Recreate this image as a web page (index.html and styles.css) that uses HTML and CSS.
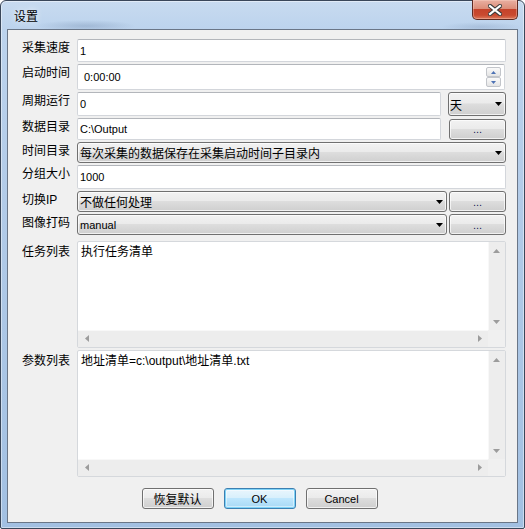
FILE: index.html
```html
<!DOCTYPE html>
<html lang="zh">
<head>
    <meta charset="UTF-8">
    <title>设置</title>
    <link rel="stylesheet" href="styles.css">
</head>
<body>
<div class="window">
    <div class="titlebar">
        <span class="title">设置</span>
        <div class="close-btn">
            <svg width="14" height="12" viewBox="0 0 14 12">
                <path d="M2 2l10 8M12 2L2 10" stroke="#3b3b3b" stroke-width="4.2" stroke-linecap="square"/>
                <path d="M2 2l10 8M12 2L2 10" stroke="#fff" stroke-width="2.2" stroke-linecap="square"/>
            </svg>
        </div>
    </div>

    <div class="client">
        <div class="form">
            <div class="row row-speed">
                <span class="label">采集速度</span>
                <div class="edit">1</div>
            </div>

            <div class="row row-start">
                <span class="label">启动时间</span>
                <div class="edit spin">
                    <span class="spin-text">0:00:00</span>
                    <div class="spin-buttons">
                        <span class="spin-btn"><svg width="5" height="3" viewBox="0 0 5 3"><path d="M2.5 0L5 3H0z"/></svg></span>
                        <span class="spin-btn"><svg width="5" height="3" viewBox="0 0 5 3"><path d="M0 0h5L2.5 3z"/></svg></span>
                    </div>
                </div>
            </div>

            <div class="row row-cycle">
                <span class="label">周期运行</span>
                <div class="edit">0</div>
                <div class="combo unit">
                    <span class="zh">天</span>
                    <svg class="arrow" width="7" height="4" viewBox="0 0 7 4"><path d="M0 0h7L3.5 4z"/></svg>
                </div>
            </div>

            <div class="row row-dir">
                <span class="label">数据目录</span>
                <div class="edit">C:\Output</div>
                <button class="btn browse">...</button>
            </div>

            <div class="row row-timedir">
                <span class="label">时间目录</span>
                <div class="combo">
                    <span class="zh">每次采集的数据保存在采集启动时间子目录内</span>
                    <svg class="arrow" width="7" height="4" viewBox="0 0 7 4"><path d="M0 0h7L3.5 4z"/></svg>
                </div>
            </div>

            <div class="row row-group">
                <span class="label">分组大小</span>
                <div class="edit">1000</div>
            </div>

            <div class="row row-ip">
                <span class="label">切换IP</span>
                <div class="combo">
                    <span class="zh">不做任何处理</span>
                    <svg class="arrow" width="7" height="4" viewBox="0 0 7 4"><path d="M0 0h7L3.5 4z"/></svg>
                </div>
                <button class="btn browse tight">...</button>
            </div>

            <div class="row row-code">
                <span class="label">图像打码</span>
                <div class="combo">
                    <span>manual</span>
                    <svg class="arrow" width="7" height="4" viewBox="0 0 7 4"><path d="M0 0h7L3.5 4z"/></svg>
                </div>
                <button class="btn browse tight">...</button>
            </div>

            <div class="row row-task">
                <span class="label memo-label">任务列表</span>
                <div class="memo">
                    <div class="memo-text">执行任务清单</div>
                    <div class="vscroll">
                        <span class="sb-btn"><svg width="7" height="4" viewBox="0 0 7 4"><path d="M3.5 0L7 4H0z"/></svg></span>
                        <span class="sb-btn"><svg width="7" height="4" viewBox="0 0 7 4"><path d="M0 0h7L3.5 4z"/></svg></span>
                    </div>
                    <div class="hscroll">
                        <span class="sb-btn"><svg width="4" height="7" viewBox="0 0 4 7"><path d="M0 3.5L4 0v7z"/></svg></span>
                        <span class="sb-btn"><svg width="4" height="7" viewBox="0 0 4 7"><path d="M0 0l4 3.5L0 7z"/></svg></span>
                    </div>
                    <div class="corner"></div>
                </div>
            </div>

            <div class="row row-param">
                <span class="label memo-label">参数列表</span>
                <div class="memo">
                    <div class="memo-text">地址清单=c:\output\地址清单.txt</div>
                    <div class="vscroll">
                        <span class="sb-btn"><svg width="7" height="4" viewBox="0 0 7 4"><path d="M3.5 0L7 4H0z"/></svg></span>
                        <span class="sb-btn"><svg width="7" height="4" viewBox="0 0 7 4"><path d="M0 0h7L3.5 4z"/></svg></span>
                    </div>
                    <div class="hscroll">
                        <span class="sb-btn"><svg width="4" height="7" viewBox="0 0 4 7"><path d="M0 3.5L4 0v7z"/></svg></span>
                        <span class="sb-btn"><svg width="4" height="7" viewBox="0 0 4 7"><path d="M0 0l4 3.5L0 7z"/></svg></span>
                    </div>
                    <div class="corner"></div>
                </div>
            </div>
        </div>

        <div class="actions">
            <button class="btn zh">恢复默认</button>
            <button class="btn btn-default">OK</button>
            <button class="btn">Cancel</button>
        </div>
    </div>
</div>
</body>
</html>
```

FILE: styles.css
```css
* {
    box-sizing: border-box;
}

body {
    margin: 0;
    background: #fff;
    font-family: "Liberation Sans", "Noto Sans CJK SC", sans-serif;
    font-size: 12px;
    color: #000;
}

.zh {
    font-size: 12px;
}

/* window frame */
.window {
    width: 525px;
    height: 529px;
    display: flex;
    flex-direction: column;
    padding: 0 6px 5px;
    border: 1px solid #3a475a;
    border-radius: 6px 6px 2px 2px;
    background:
        radial-gradient(ellipse 50px 6px at 85px 25px, rgba(110, 135, 170, 0.35), transparent),
        radial-gradient(ellipse 40px 5px at 480px 26px, rgba(110, 135, 170, 0.25), transparent),
        linear-gradient(180deg, #c8dbf0 0, #bcd3ed 28px, #b2cbe8 200px, #a2c0e2 100%);
    box-shadow: inset 0 0 0 1px rgba(255, 255, 255, 0.45);
}

.titlebar {
    height: 28px;
    display: flex;
    align-items: flex-start;
}

.title {
    margin: 8px 0 0 7px;
    line-height: 16px;
    text-shadow: 0 0 6px rgba(255, 255, 255, 0.9);
}

.close-btn {
    margin-left: auto;
    margin-top: -1px;
    width: 46px;
    height: 20px;
    display: flex;
    align-items: center;
    justify-content: center;
    border: 1px solid #5e2a22;
    border-top: none;
    border-radius: 0 0 5px 5px;
    background: linear-gradient(180deg, #e9b0a2 0, #dc8e7a 45%, #c5432b 50%, #c94a30 80%, #dd7a5c 100%);
    box-shadow: inset 0 0 0 1px rgba(255, 220, 210, 0.35);
}

.client {
    flex: 1;
    display: flex;
    flex-direction: column;
    border: 1px solid #6a7687;
    background: #f0f0f0;
}

/* form */
.form {
    display: flex;
    flex-direction: column;
    gap: 2px;
    padding: 9px 11px 0 14px;
}

.row {
    display: flex;
    align-items: flex-start;
}

.row-speed { height: 23px; }
.row-start { height: 26px; }
.row-cycle { height: 24px; }
.row-dir { height: 22px; }
.row-timedir { height: 21px; }
.row-group { height: 24px; }
.row-ip { height: 21px; }
.row-code { height: 21px; }
.row-task { height: 107px; margin-top: 4px; }
.row-param { height: 127px; }

.label {
    width: 55px;
    flex-shrink: 0;
    line-height: 16px;
    padding-top: 1px;
    white-space: nowrap;
}

.memo-label {
    padding-top: 3px;
}

.edit {
    flex: 1;
    height: 100%;
    display: flex;
    align-items: center;
    padding-left: 2px;
    font-size: 11px;
    background: #fff;
    border: 1px solid #d3d6db;
    border-top-color: #b3b6bb;
    border-radius: 2px;
}

.spin {
    justify-content: space-between;
    padding-left: 6px;
    margin-right: 1px;
}

.spin-buttons {
    display: flex;
    flex-direction: column;
    margin-right: 3px;
}

.spin-btn {
    width: 15px;
    height: 10px;
    display: flex;
    align-items: center;
    justify-content: center;
    border: 1px solid #c2c5ca;
    border-radius: 2px;
    background: linear-gradient(180deg, #fafafa, #e4e4e4);
    fill: #4d72b4;
}

.combo {
    flex: 1;
    height: 21px;
    display: flex;
    align-items: center;
    justify-content: space-between;
    padding: 0 3px 0 2px;
    font-size: 11px;
    border: 1px solid #707070;
    border-radius: 3px;
    background: linear-gradient(180deg, #f2f2f2 0, #ebebeb 45%, #dddddd 50%, #cfcfcf 100%);
    box-shadow: inset 0 0 0 1px rgba(255, 255, 255, 0.7);
}

.combo.unit {
    flex: none;
    width: 58px;
    height: 24px;
    margin-left: 7px;
    padding-left: 1px;
}

.arrow {
    flex-shrink: 0;
    fill: #000;
}

.btn {
    width: 72px;
    height: 21px;
    padding: 0;
    font-family: "Liberation Sans", "Noto Sans CJK SC", sans-serif;
    font-size: 11px;
    color: #000;
    border: 1px solid #707070;
    border-radius: 3px;
    background: linear-gradient(180deg, #f2f2f2 0, #ebebeb 45%, #dddddd 50%, #cfcfcf 100%);
    box-shadow: inset 0 0 0 1px rgba(255, 255, 255, 0.7);
}

.btn.zh {
    font-size: 12px;
}

.browse {
    width: 57px;
    margin-left: 8px;
    align-self: center;
    color: #1a1a5a;
}

.browse.tight {
    margin-left: 2px;
}

.btn-default {
    border-color: #3c7fb1;
    background: linear-gradient(180deg, #eaf6fd 0, #d9f0fc 45%, #bee6fd 50%, #a7d9f5 100%);
    box-shadow: inset 0 0 0 1px #7fd3f7, inset 0 0 0 2px rgba(255, 255, 255, 0.45);
}

/* multi-line boxes */
.memo {
    flex: 1;
    height: 100%;
    display: grid;
    grid-template-columns: 1fr 17px;
    grid-template-rows: 1fr 17px;
    background: #fff;
    border: 1px solid #d5d8dc;
    border-radius: 2px;
}

.memo-text {
    padding: 2px 3px;
    line-height: 16px;
}

.vscroll,
.hscroll {
    display: flex;
    justify-content: space-between;
    background: #ededed;
    fill: #9c9c9c;
}

.vscroll {
    flex-direction: column;
    box-shadow: inset 1px 0 #f8f8f8;
}

.hscroll {
    box-shadow: inset 0 1px #f8f8f8;
}

.sb-btn {
    width: 17px;
    height: 17px;
    display: flex;
    align-items: center;
    justify-content: center;
}

.corner {
    background: #f0f0f0;
}

/* dialog buttons */
.actions {
    display: flex;
    justify-content: center;
    gap: 10px;
    margin-top: 11px;
    padding-right: 6px;
}
```
